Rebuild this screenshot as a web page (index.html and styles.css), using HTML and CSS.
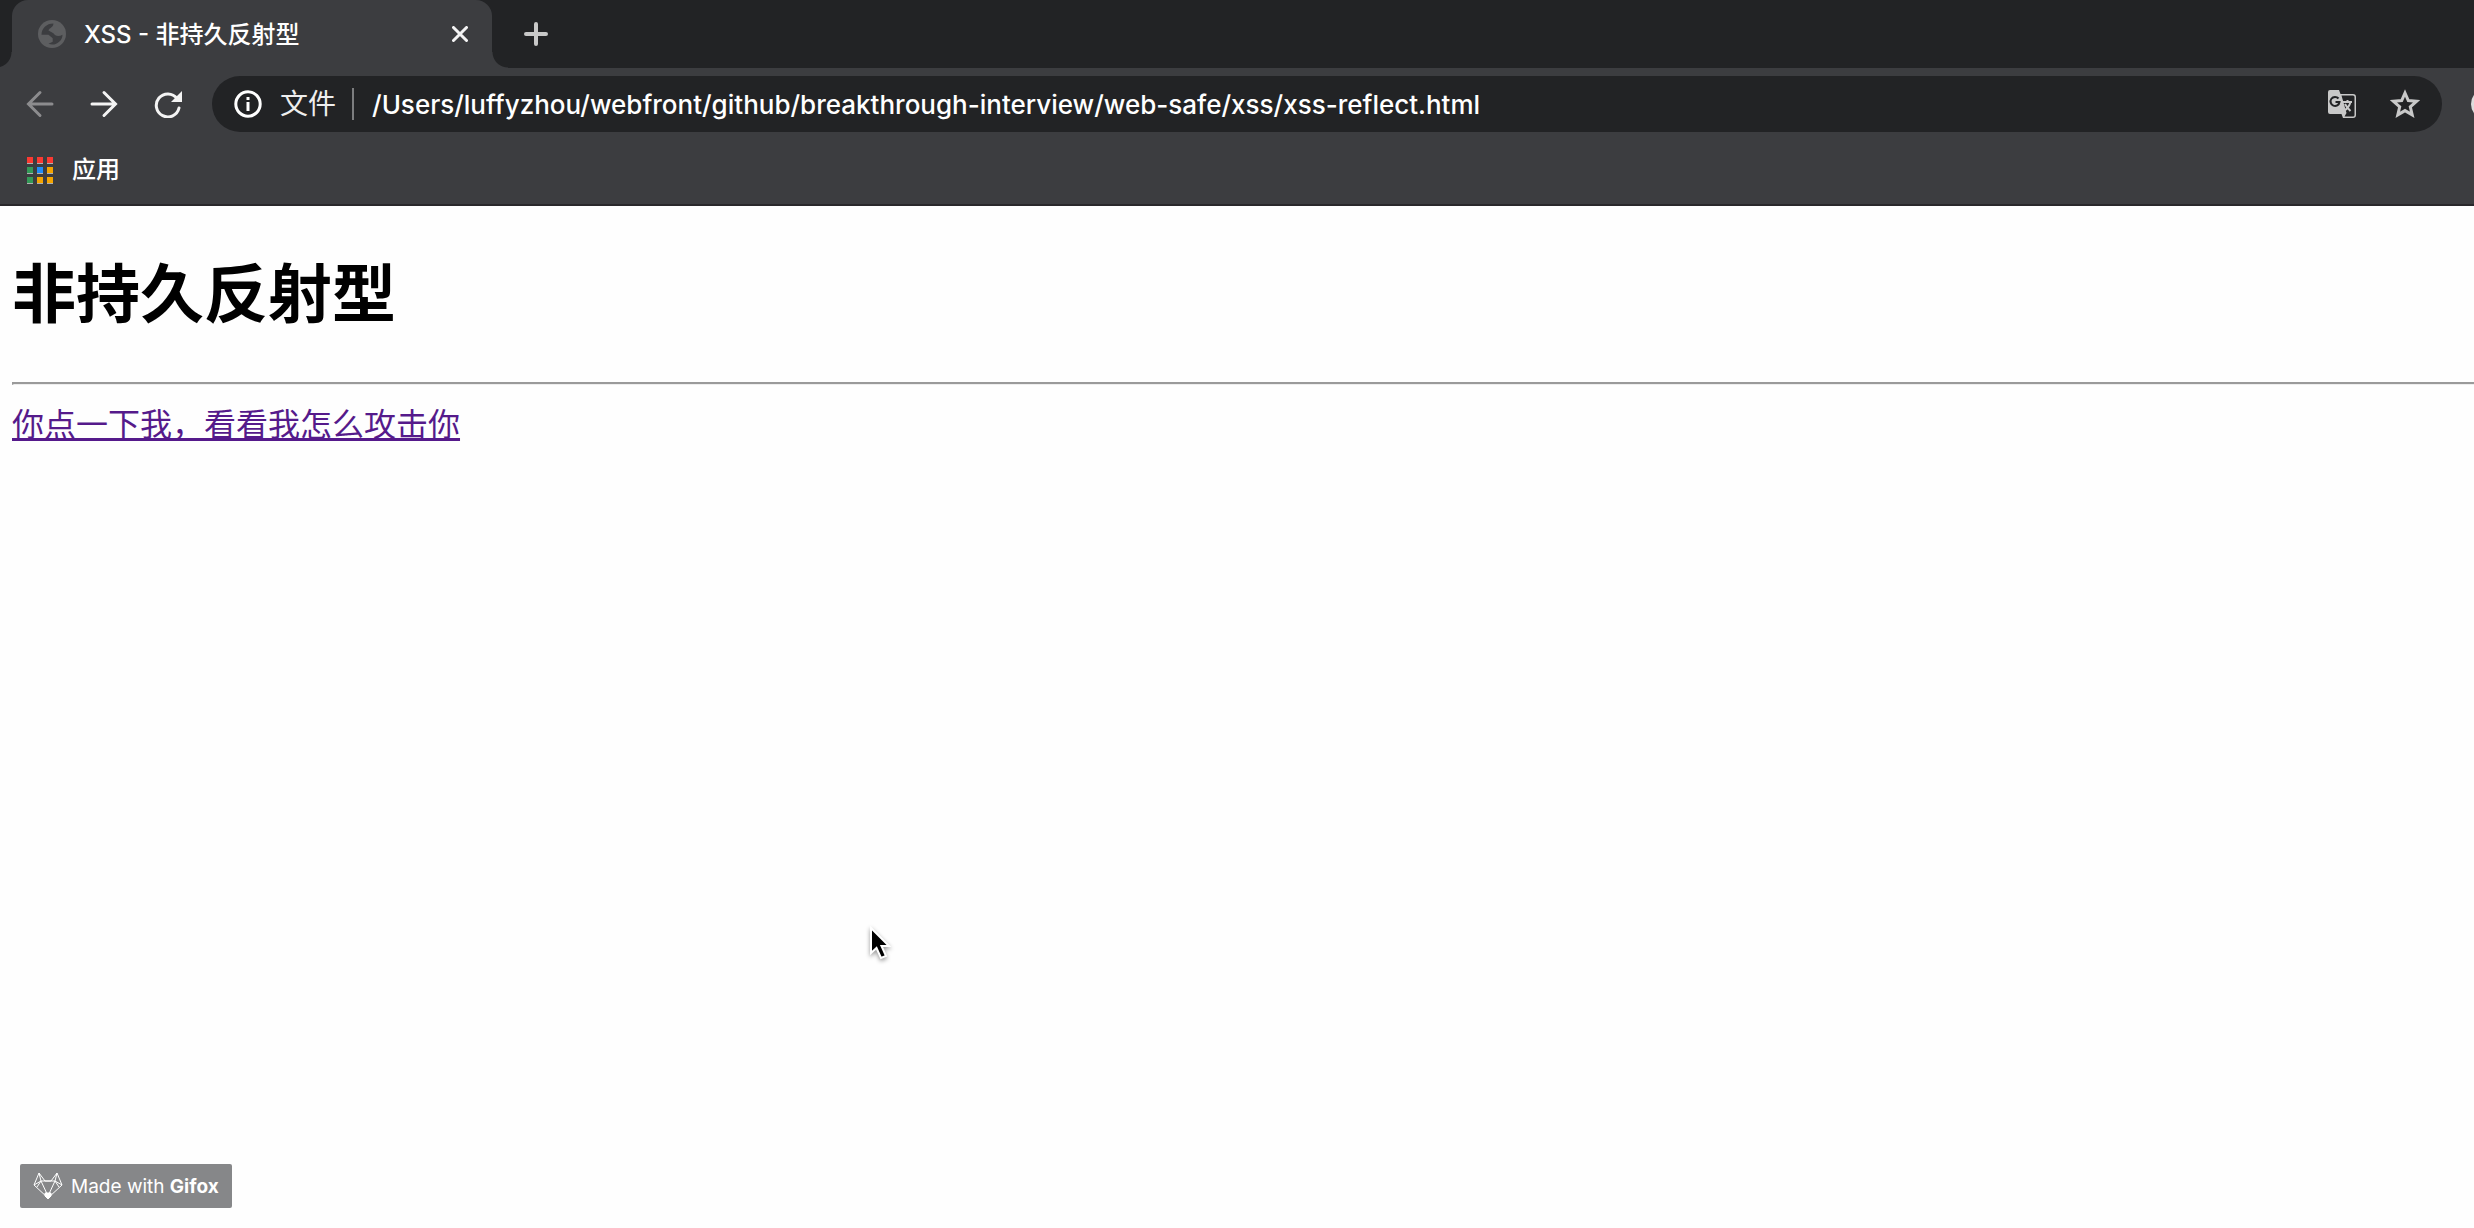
FILE: index.html
```html
<!DOCTYPE html>
<html lang="zh-CN">
<head>
    <meta charset="UTF-8">
    <meta name="viewport" content="width=device-width, initial-scale=1.0">
    <title>XSS - 非持久反射型</title>
    <link rel="stylesheet" href="styles.css">
</head>
<body>
    <header class="browser">
        <div class="tabs">
            <div class="tab">
                <svg class="icon favicon" viewBox="0 0 20 20"><circle cx="10" cy="10" r="10"/><path class="land" d="M11 2.500C6 2.500 2.500 6 2.500 10.500h5l3 2.500v2.500l-3 1.500c5 2 10-2 10-6.500-2.500 1.500-5.500 1-6.500-1L7.500 7.500c.5-2 3.500-2 3.500-5z"/></svg>
                <span class="tab-title">XSS - 非持久反射型</span>
                <button class="btn close" type="button" aria-label="关闭">
                    <svg class="icon" width="16" height="16" viewBox="0 0 16 16"><path d="M1.500 1.500l13 13M14.500 1.500l-13 13"/></svg>
                </button>
            </div>
            <button class="btn new-tab" type="button" aria-label="新标签页">
                <svg class="icon" width="24" height="24" viewBox="0 0 24 24"><path d="M12 2v20M2 12h20"/></svg>
            </button>
        </div>
        <div class="toolbar">
            <nav class="nav">
                <button class="btn back" type="button" aria-label="后退">
                    <svg class="icon" width="28" height="28" viewBox="0 0 28 28"><path d="M26 14H3M14 2.500L2.500 14 14 25.500"/></svg>
                </button>
                <button class="btn" type="button" aria-label="前进">
                    <svg class="icon" width="28" height="28" viewBox="0 0 28 28"><path d="M2 14h23M14 2.500L25.500 14 14 25.500"/></svg>
                </button>
                <button class="btn" type="button" aria-label="刷新">
                    <svg class="icon" width="28" height="28" viewBox="0 0 28 28"><path d="M23 8.500A11.500 11.500 0 1 0 25 18"/><path class="solid" d="M28 1v11H17z"/></svg>
                </button>
            </nav>
            <form class="address">
                <svg class="icon info" width="28" height="28" viewBox="0 0 28 28"><circle cx="14" cy="14" r="12.200"/><path class="solid" d="M12.500 7h3v3h-3zM12.500 12h3v9h-3z"/></svg>
                <label class="scheme" for="url">文件</label>
                <input class="url" id="url" type="text" spellcheck="false" value="/Users/luffyzhou/webfront/github/breakthrough-interview/web-safe/xss/xss-reflect.html">
                <button class="btn" type="button" aria-label="翻译">
                    <svg class="icon translate" width="28" height="28" viewBox="0 0 28 28"><path class="solid" d="M2 0h9l1.500 4H25a3 3 0 0 1 3 3v18a3 3 0 0 1-3 3H15l-1.500-4H2a2 2 0 0 1-2-2V2a2 2 0 0 1 2-2z"/><path class="cut" d="M13.500 5.500H25A1.500 1.500 0 0 1 26.500 7v18a1.500 1.500 0 0 1-1.500 1.500h-8.500l2-3.500z"/><path class="g" d="M10.500 8.500A4.500 4.500 0 1 0 11.500 12H7.500"/><path class="wen" d="M15 12h9M19.500 10v2M22.500 12c-1 4-3 6.500-6 8.500M17 14c1.500 3 3.500 5 5.500 7"/></svg>
                </button>
                <button class="btn" type="button" aria-label="收藏">
                    <svg class="icon star" width="30" height="30" viewBox="0 0 30 30"><path d="M15 4l3.300 7.600 8.200.7-6.200 5.500 1.900 8.100L15 21.600l-7.200 4.300 1.900-8.100-6.200-5.500 8.200-.7z"/></svg>
                </button>
            </form>
            <span class="avatar"></span>
        </div>
        <div class="bookmarks">
            <a class="apps" href="#">
                <svg width="26" height="27" viewBox="0 0 26 27">
                    <path fill="#b0b0b0" d="M0 1h6v6H0zM10 1h6v6h-6zM20 1h6v6h-6zM0 11h6v6H0zM10 11h6v6h-6zM20 11h6v6h-6zM0 21h6v6H0zM10 21h6v6h-6zM20 21h6v6h-6z"/>
                    <path fill="#fa3a32" d="M0 0h6v6H0zM10 0h6v6h-6zM20 0h6v6h-6z"/>
                    <path fill="#349a58" d="M0 10h6v6H0zM0 20h6v6H0z"/>
                    <path fill="#1e8cfa" d="M10 10h6v6h-6z"/>
                    <path fill="#f4a400" d="M20 10h6v6h-6zM10 20h6v6h-6zM20 20h6v6h-6z"/>
                </svg>
                应用
            </a>
        </div>
    </header>

    <main class="page">
        <h1>非持久反射型</h1>
        <hr>
        <a class="attack" href="#">你点一下我，看看我怎么攻击你</a>
    </main>

    <svg class="cursor" width="26" height="38" viewBox="0 0 26 38"><path d="M4 3v25l5.500-5L14 33l5-2-4.500-10H22z"/></svg>
    <div class="badge">
        <svg width="30" height="28" viewBox="0 0 30 28"><path d="M6 1L1 13l14 13 14-13-5-12-6 8h-6zM6 1l2 8 7 15 7-15 2-8M1 13l7-4h14l7 4M8 9L4 15M22 9l4 6"/><path class="nose" d="M12 21h6v3l-3 3-3-3z"/></svg>
        <span>Made with <b>Gifox</b></span>
    </div>
</body>
</html>
```
FILE: styles.css
```css
body {
    margin: 0;
    min-height: 100vh;
    position: relative;
    overflow: hidden;
    background-color: #fefefe;
    font-family: Inter, "Noto Sans CJK SC", sans-serif;
}
.browser {
    background-color: #3c3d40;
    color: #fff;
    border-bottom: 2px solid #29282b;
}
.icon {
    display: block;
    fill: none;
    stroke: currentColor;
    stroke-width: 3;
    stroke-linecap: round;
}
.solid {
    fill: currentColor;
    stroke: none;
}
.btn {
    padding: 0;
    border: none;
    background: none;
    color: #f4f4f4;
}
.tabs {
    display: flex;
    align-items: center;
    height: 68px;
    padding-left: 12px;
    background-color: #222325;
}
.tab {
    position: relative;
    box-sizing: border-box;
    display: flex;
    align-items: center;
    width: 480px;
    height: 68px;
    padding: 0 24px 0 26px;
    border-radius: 16px 16px 0 0;
    background-color: #3c3d40;
    font-size: 24px;
    font-weight: 500;
}
.tab::before,
.tab::after {
    content: "";
    position: absolute;
    bottom: 0;
    width: 16px;
    height: 16px;
}
.tab::before {
    right: 100%;
    background: radial-gradient(circle at 0 0, #222325 15px, #3c3d40 16px);
}
.tab::after {
    left: 100%;
    background: radial-gradient(circle at 100% 0, #222325 15px, #3c3d40 16px);
}
.favicon {
    width: 28px;
    height: 28px;
    fill: #5d5e60;
    stroke: none;
}
.land {
    fill: #3c3d40;
}
.tab-title {
    flex: 1;
    margin-left: 18px;
    padding-bottom: 4px;
}
.new-tab {
    margin-left: 32px;
    color: #c8c8c8;
}
.new-tab .icon {
    stroke-width: 4;
}
.toolbar {
    display: flex;
    align-items: center;
    padding: 8px 0;
    padding-left: 26px;
}
.nav {
    display: flex;
    gap: 36px;
    margin-right: 30px;
}
.back {
    color: #8c8c8e;
}
.address {
    flex: 1;
    display: flex;
    align-items: center;
    gap: 34px;
    height: 56px;
    padding: 0 22px;
    border-radius: 28px;
    background-color: #222325;
}
.info {
    margin-right: -16px;
}
.scheme {
    margin-right: -16px;
    padding-right: 16px;
    border-right: 2px solid #7c7d7f;
    color: #eee;
    font-size: 28px;
    line-height: 32px;
}
.url {
    flex: 1;
    padding: 0;
    border: none;
    background: none;
    color: #fff;
    font: inherit;
    font-size: 26px;
    font-weight: 500;
    outline: none;
}
.translate,
.star {
    color: #c8c8c8;
}
.star {
    stroke-linecap: butt;
}
.cut {
    fill: #222325;
    stroke: none;
}
.g {
    stroke: #222325;
    stroke-width: 2;
    stroke-linecap: butt;
}
.wen {
    stroke-width: 2;
    stroke-linecap: butt;
}
.avatar {
    width: 32px;
    height: 32px;
    margin: 0 -29px 0 29px;
    border-radius: 50%;
    background-color: #ddd;
}
.bookmarks {
    display: flex;
    align-items: center;
    height: 60px;
    padding: 0 27px 4px;
}
.apps {
    display: flex;
    align-items: center;
    gap: 19px;
    color: #fff;
    font-size: 24px;
    font-weight: 500;
    line-height: 32px;
    text-decoration: none;
}
.page {
    padding: 36px 0 0 12px;
    font-family: "Noto Sans CJK SC", sans-serif;
    font-size: 32px;
}
h1 {
    margin: 0 0 46px;
    color: #000;
    font-size: 64px;
    line-height: 94px;
}
hr {
    margin: 0 0 14px;
    border: 2px inset #eee;
    border-width: 2px 0 1px 2px;
}
.attack {
    color: #551a8b;
    line-height: 46px;
}
.cursor {
    position: absolute;
    left: 867px;
    top: 925px;
    fill: #000;
    stroke: #fff;
    stroke-width: 2;
    filter: drop-shadow(0 2px 2px rgba(0, 0, 0, 0.4));
}
.badge {
    position: absolute;
    left: 20px;
    bottom: 20px;
    display: flex;
    align-items: center;
    gap: 8px;
    height: 44px;
    padding: 0 13px;
    border-radius: 2px;
    background-color: #868789;
    color: #fff;
    font-size: 19px;
}
.badge svg {
    fill: none;
    stroke: #fff;
    stroke-width: 1;
}
.badge .nose {
    fill: #fff;
}
```
